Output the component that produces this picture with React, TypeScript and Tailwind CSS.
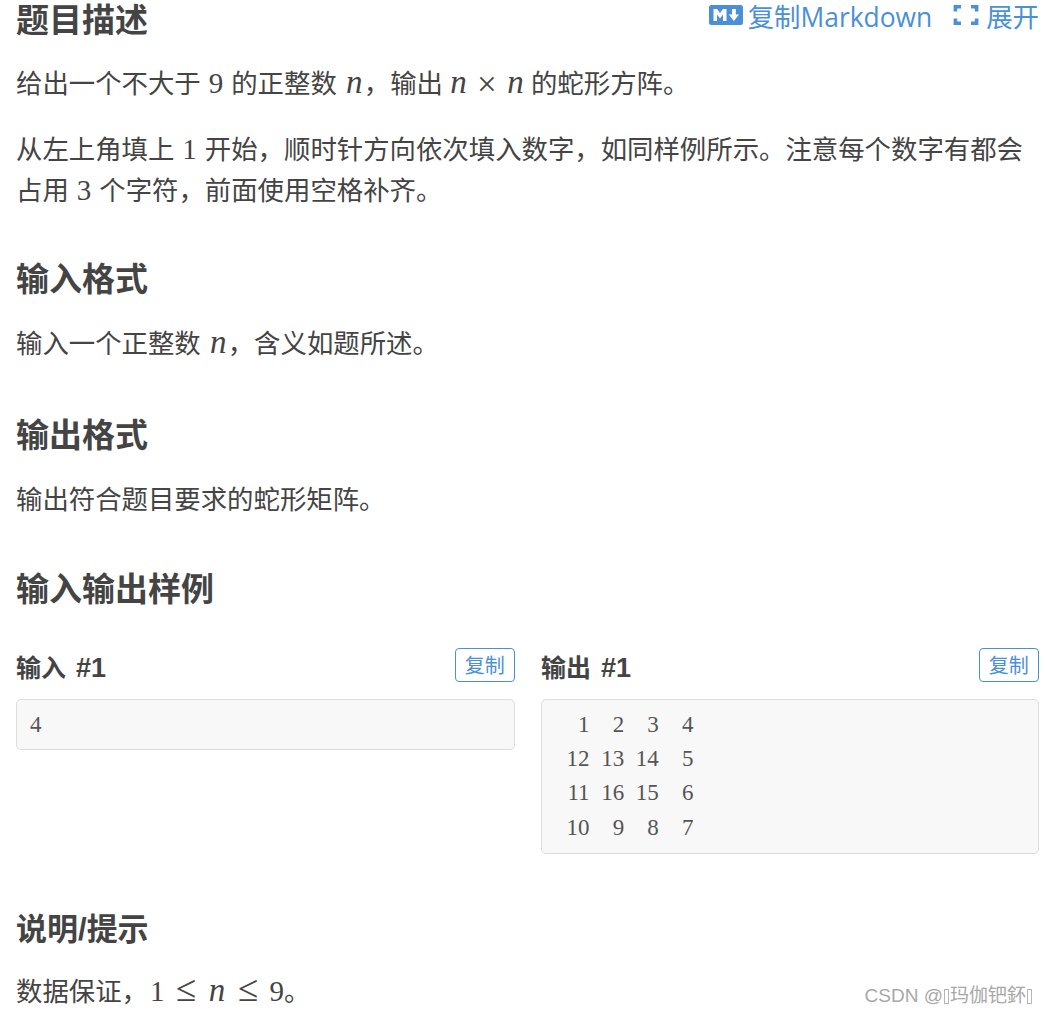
import React from "react";

const cjk = '"Noto Sans CJK SC", "Noto Sans", sans-serif';

function MarkdownIcon() {
  return (
    <svg viewBox="0 0 34 20" className="w-[34px] h-[20px]">
      <rect width="34" height="20" rx="2.5" fill="#4a90d9" />
      <path d="M4.5 16V4h3.6l2.9 4 2.9-4h3.6v12h-3.5V9.6L11 13.4 8 9.6V16z" fill="#fff" />
      <path d="M23 4h3.8v5.6h3.2L24.9 16 19.8 9.6H23z" fill="#fff" />
    </svg>
  );
}

function ExpandIcon() {
  return (
    <svg viewBox="0 0 26 20" className="w-[26px] h-[20px]" fill="none" stroke="#4a90d9" strokeWidth="3.6">
      <path d="M8 1.8H2.4V6.5M18 1.8h5.6V6.5M8 18.2H2.4V13.5M18 18.2h5.6V13.5" />
    </svg>
  );
}

function M({ children, className }: { children: React.ReactNode; className?: string }) {
  return (
    <span className={`text-[29px] leading-[0] ${className ?? "mx-[8px]"}`} style={{ fontFamily: '"Liberation Serif", serif' }}>
      {children}
    </span>
  );
}

// the math n is wide in the picture, so it sits in a fixed box
function N() {
  return <i className="inline-block w-[19px] text-center text-[33px] leading-[0]">n</i>;
}

function Times() {
  return <span className="inline-block w-[20px] mx-[9px] text-center text-[35px] leading-[0] align-[-3px]">×</span>;
}

function Leq() {
  return <span className="inline-block w-[21px] mx-[11px] text-center text-[37px] leading-[0]">≤</span>;
}

function Heading({ children, className }: { children: React.ReactNode; className?: string }) {
  return <h2 className={`text-[33px] leading-[40px] font-bold text-[#444] ${className ?? ""}`}>{children}</h2>;
}

function Sample({ title, rows, plain }: { title: string; rows: string[][]; plain?: boolean }) {
  return (
    <div>
      <div className="flex justify-between items-center h-[34px] mb-[17px]">
        <span className="text-[25px] font-bold text-[#444] mt-[4px]">
          {title}
          <span className="text-[27px] ml-[10px]" style={{ fontFamily: '"Liberation Sans", sans-serif' }}>
            #1
          </span>
        </span>
        <button className="h-[34px] w-[60.5px] rounded-[4px] border border-[#4a90d9] text-[#4a90d9] text-[20px] leading-none flex items-center justify-center">
          复制
        </button>
      </div>
      <div className="bg-[#f8f8f8] border border-[#ddd] rounded-[5px] pl-[13px] py-[7.5px] text-[23px] leading-[34.4px] text-[#555]" style={{ fontFamily: '"Liberation Serif", serif' }}>
        {rows.map((row, i) => (
          <div key={i} className="flex">
            {row.map((cell, j) => (
              <span key={j} className={plain ? "" : "w-[34.6px] text-right"}>
                {cell}
              </span>
            ))}
          </div>
        ))}
      </div>
    </div>
  );
}

export default function App() {
  return (
    <div className="relative w-[1046px] h-[1014px] overflow-hidden bg-white text-[26.4px] leading-[41px] text-[#444] pl-[16px] pr-[7px]" style={{ fontFamily: cjk }}>
      <div className="flex justify-between items-start h-[36px]">
        <h1 className="text-[33px] leading-[36px] font-bold text-[#444]">题目描述</h1>
        <div className="flex items-center text-[#4a90d9] h-[32px] leading-[32px]">
          <span className="flex -mt-[2px]">
            <MarkdownIcon />
          </span>
          <span className="ml-[5px]">
            复制<span style={{ fontFamily: '"Open Sans", sans-serif' }}>Markdown</span>
          </span>
          <span className="ml-[21px] mr-[7px] flex -mt-[2px]">
            <ExpandIcon />
          </span>
          <span>展开</span>
        </div>
      </div>

      <p className="mt-[25px]">
        给出一个不大于
        <M>9</M>
        的正整数
        <M className="ml-[8px]">
          <N />
        </M>
        ，输出
        <M className="ml-[6px] mr-[6px]">
          <N />
          <Times />
          <N />
        </M>
        的蛇形方阵。
      </p>
      <p className="mt-[25px]">
        从左上角填上
        <M>1</M>
        开始，顺时针方向依次填入数字，如同样例所示。注意每个数字有都会
        <br />
        占用
        <M>3</M>
        个字符，前面使用空格补齐。
      </p>

      <Heading className="mt-[48px]">输入格式</Heading>
      <p className="mt-[24px]">
        输入一个正整数
        <M className="ml-[8px]">
          <N />
        </M>
        ，含义如题所述。
      </p>

      <Heading className="mt-[51px]">输出格式</Heading>
      <p className="mt-[24px]">输出符合题目要求的蛇形矩阵。</p>

      <Heading className="mt-[49px]">输入输出样例</Heading>

      <div className="grid grid-cols-[499px_498px] gap-x-[26px] items-start mt-[41px]">
        <Sample title="输入" rows={[["4"]]} plain />
        <Sample
          title="输出"
          rows={[
            ["1", "2", "3", "4"],
            ["12", "13", "14", "5"],
            ["11", "16", "15", "6"],
            ["10", "9", "8", "7"],
          ]}
        />
      </div>

      <h2 className="mt-[53px] text-[31px] leading-[40px] font-bold text-[#444]">
        说明<span style={{ fontFamily: '"Liberation Sans", sans-serif' }}>/</span>提示
      </h2>
      <p className="mt-[19px]">
        数据保证，
        <M className="ml-[2px]">
          1<Leq />
          <N />
          <Leq />9
        </M>
        。
      </p>

      <div className="absolute right-[13px] bottom-[5px] flex items-center text-[19px] leading-[26px] text-[#a8a8a8]" style={{ fontFamily: `"Liberation Sans", ${cjk}` }}>
        <span>CSDN @</span>
        <span className="inline-block w-[5px] h-[15px] border border-[#b5b5b5] mx-[1px]" />
        <span>玛伽钯鈈</span>
        <span className="inline-block w-[5px] h-[15px] border border-[#b5b5b5] mx-[1px]" />
      </div>
    </div>
  );
}
